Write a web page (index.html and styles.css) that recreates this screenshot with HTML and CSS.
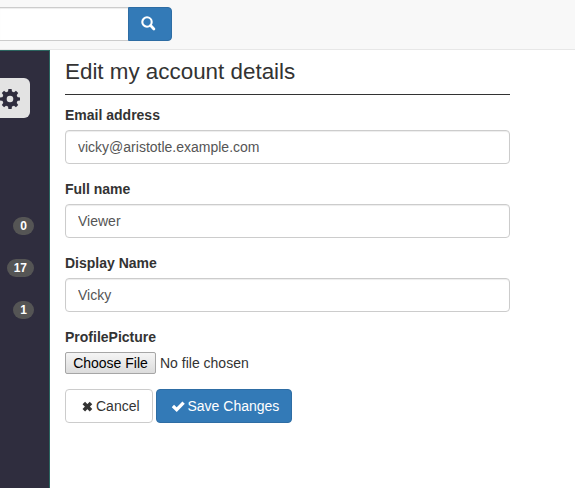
FILE: index.html
```html
<!DOCTYPE html>
<html lang="en">
<head>
<meta charset="utf-8">
<title>Edit my account details</title>
<link rel="stylesheet" href="styles.css">
</head>
<body>
<header class="navbar">
  <div class="search-field"></div>
  <button class="search-button" aria-label="Search">
    <svg width="15" height="15" viewBox="0 0 15 15"><circle cx="6" cy="6" r="4.7" fill="none" stroke="#fff" stroke-width="2.1"/><path d="M9.6 9.6l3.3 3.3" stroke="#fff" stroke-width="2.8" stroke-linecap="round"/></svg>
  </button>
</header>
<div class="layout">
  <aside class="sidebar">
    <div class="settings">
      <svg width="20" height="20" viewBox="-10 -10 20 20"><g fill="#2f2d3e"><circle r="7.7"/><g id="t"><path id="a" d="M-2.1-6.5L-1.6-10H1.6L2.1-6.5V6.5L1.6 10H-1.6L-2.1 6.5Z"/><use href="#a" transform="rotate(90)"/></g><use href="#t" transform="rotate(45)"/></g><circle r="3.3" fill="#e3e3e3"/></svg>
    </div>
    <div class="counts">
      <span class="badge">0</span>
      <span class="badge">17</span>
      <span class="badge">1</span>
    </div>
  </aside>
  <main class="content">
    <h1>Edit my account details</h1>
    <form>
      <div class="group"><label for="email">Email address</label><input id="email" class="control" type="text" value="vicky@aristotle.example.com"></div>
      <div class="group"><label for="full">Full name</label><input id="full" class="control" type="text" value="Viewer"></div>
      <div class="group"><label for="display">Display Name</label><input id="display" class="control" type="text" value="Vicky"></div>
      <div class="group"><label>ProfilePicture</label>
        <div class="file"><button type="button" class="choose">Choose File</button><span>No file chosen</span></div>
      </div>
      <div class="actions">
        <button type="button" class="btn cancel"><svg width="14" height="14" viewBox="0 0 14 14"><path d="M3.8 4l7.2 7.2M11 4l-7.2 7.2" stroke="#333" stroke-width="3.6"/></svg>Cancel</button>
        <button type="button" class="btn save"><svg width="14" height="14" viewBox="0 0 14 14"><path d="M1.9 7l3.8 3.6L12.6 3.6" fill="none" stroke="#fff" stroke-width="3.3"/></svg>Save Changes</button>
      </div>
    </form>
  </main>
</div>
</body>
</html>
```
FILE: styles.css
```css
* { box-sizing: border-box; }
body {
  margin: 0;
  height: 488px;
  overflow: hidden;
  display: flex;
  flex-direction: column;
  background: #fff;
  color: #333;
  font: 14px/20px "Liberation Sans", Arial, sans-serif;
}
button, input { font: inherit; margin: 0; }
svg { display: block; }
.navbar {
  display: flex;
  height: 50px;
  padding-top: 7px;
  background: #f8f8f8;
  border-bottom: 1px solid #e7e7e7;
}
.search-field {
  width: 128px;
  height: 34px;
  background: #fff;
  border: solid #ccc;
  border-width: 1px 0;
  box-shadow: inset 0 1px 1px rgba(0, 0, 0, .075);
}
.search-button {
  display: flex;
  width: 44px;
  height: 34px;
  padding: 8px 0 0 12px;
  background: #337ab7;
  border: 1px solid #2e6da4;
  border-radius: 0 4px 4px 0;
}
.layout { display: flex; flex: 1; }
.sidebar {
  width: 50px;
  padding-top: 27px;
  background: #2f2d3e;
  border: solid #2b6560;
  border-width: 1px 1px 0 0;
}
.settings {
  width: 30px;
  height: 40px;
  padding-top: 11px;
  background: #e3e3e3;
  border-radius: 0 6px 6px 0;
}
.counts {
  display: flex;
  flex-direction: column;
  align-items: flex-end;
  gap: 24px;
  padding: 99px 15px 0 0;
}
.badge {
  height: 18px;
  padding: 3px 7px;
  border-radius: 10px;
  background: #555;
  color: #fff;
  font-size: 12px;
  font-weight: 700;
  line-height: 12px;
}
.content { width: 445px; margin-left: 15px; }
h1 {
  height: 45px;
  margin: 0 0 10px;
  padding-top: 9px;
  border-bottom: 1px solid #333;
  font-size: 22.4px;
  font-weight: 400;
  line-height: 26px;
}
.group { margin-bottom: 15px; }
label { display: block; margin-bottom: 5px; font-weight: 700; }
.control {
  display: block;
  width: 100%;
  height: 34px;
  padding: 6px 12px;
  color: #555;
  background: #fff;
  border: 1px solid #ccc;
  border-radius: 4px;
  box-shadow: inset 0 1px 1px rgba(0, 0, 0, .075);
}
.file { display: flex; gap: 4px; height: 22px; line-height: 22px; }
.choose {
  width: 91px;
  height: 22px;
  padding: 0;
  border: 1px solid #a6a6a6;
  border-radius: 2px;
  background: linear-gradient(#f5f5f5, #dcdcdc);
  color: #000;
  line-height: 20px;
}
.actions { display: flex; gap: 3px; }
.btn {
  display: flex;
  align-items: center;
  gap: 2px;
  height: 34px;
  padding: 0 11px 0 14px;
  border: 1px solid #ccc;
  border-radius: 4px;
  background: #fff;
  color: #333;
}
.cancel { width: 88px; }
.save { width: 136px; gap: 2.5px; background: #337ab7; border-color: #2e6da4; color: #fff; }
```
